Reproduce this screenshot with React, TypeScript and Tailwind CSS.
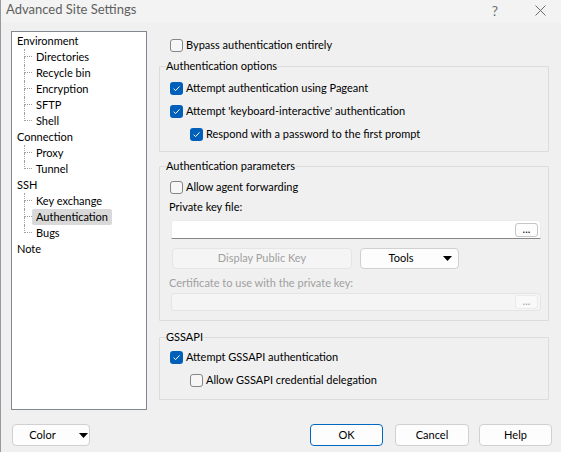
import React from "react";

const tree = [
  { label: "Environment", children: ["Directories", "Recycle bin", "Encryption", "SFTP", "Shell"] },
  { label: "Connection", children: ["Proxy", "Tunnel"] },
  { label: "SSH", children: ["Key exchange", "Authentication", "Bugs"] },
  { label: "Note", children: [] as string[] },
];

function Check({ checked }: { checked?: boolean }) {
  if (checked) {
    return (
      <span className="w-[13px] h-[13px] rounded-[3px] bg-[#005fb8] flex items-center justify-center shrink-0">
        <svg width="9" height="9" viewBox="0 0 9 9">
          <path d="M1.6 4.7 L3.6 6.6 L7.5 2.4" stroke="white" strokeWidth="1" fill="none" />
        </svg>
      </span>
    );
  }
  return <span className="w-[13px] h-[13px] rounded-[3px] border border-[#858585] bg-[#f6f6f6] shrink-0" />;
}

function CheckRow({ label, checked, className = "" }: { label: string; checked?: boolean; className?: string }) {
  return (
    <div className={`flex items-center h-[16px] gap-[3px] ${className}`}>
      <Check checked={checked} />
      <span className="leading-[16px] whitespace-nowrap">{label}</span>
    </div>
  );
}

function Arrow() {
  return (
    <svg width="9" height="5" viewBox="0 0 9 5" className="shrink-0">
      <polygon points="0,0 9,0 4.5,5" fill="#000" />
    </svg>
  );
}

function Group({ title, className = "", children }: { title: string; className?: string; children: React.ReactNode }) {
  return (
    <fieldset className={`border border-[#dcdcdc] rounded-[1px] w-[390px] ${className}`}>
      <legend className="ml-[6px] leading-[16px] px-0">{title}</legend>
      {children}
    </fieldset>
  );
}

function DialogButton({ children, primary, className = "" }: { children: React.ReactNode; primary?: boolean; className?: string }) {
  return (
    <button
      className={`h-[22px] rounded-[4px] border bg-[#fdfdfd] text-[11px] text-black flex items-center justify-center ${
        primary ? "border-[#0067c0]" : "border-[#d0d0d0]"
      } ${className}`}
    >
      {children}
    </button>
  );
}

export default function App() {
  return (
    <div
      className="w-[561px] h-[452px] bg-[#f0f0f0] overflow-hidden flex flex-col text-[11px] text-black border-l border-[#9a9a9a]"
      style={{ fontFamily: "Lato, 'Liberation Sans', sans-serif" }}
    >
      {/* title bar */}
      <div className="h-[23px] bg-[#f3f3f3] flex items-center pb-[3px] shrink-0">
        <span className="ml-[5px] text-[13px] text-[#5f5f5f]">Advanced Site Settings</span>
        <span className="ml-auto text-[14px] text-[#707070] mr-[37px]">?</span>
        <svg width="11" height="11" viewBox="0 0 11 11" className="mr-[15px]">
          <path d="M0.5 0.5 L10.5 10.5 M10.5 0.5 L0.5 10.5" stroke="#6a6a6a" strokeWidth="1" />
        </svg>
      </div>

      <div className="flex h-[387px] shrink-0">
        {/* navigation tree */}
        <div className="ml-[10px] mt-[8px] w-[136px] h-[379px] border border-[#828790] bg-white pt-[1px] pl-[5px]">
          {tree.map((node) => (
            <div key={node.label}>
              <div className="h-[16px] leading-[16px]">{node.label}</div>
              {node.children.map((child, i) => {
                const last = i === node.children.length - 1;
                const selected = child === "Authentication";
                return (
                  <div key={child} className="flex h-[16px]">
                    <div className="w-[7px] shrink-0" />
                    <div className="w-[8px] shrink-0 flex flex-col">
                      <div className="h-[8px] border-l border-b border-dotted border-[#a0a0a0]" />
                      <div className={`h-[8px] ${last ? "" : "border-l border-dotted border-[#a0a0a0]"}`} />
                    </div>
                    <div
                      className={`px-[4px] leading-[16px] whitespace-nowrap rounded-[2px] ${
                        selected ? "bg-[#d9d9d9]" : ""
                      }`}
                    >
                      {child}
                    </div>
                  </div>
                );
              })}
            </div>
          ))}
        </div>

        {/* right pane */}
        <div className="ml-[12px] flex flex-col">
          <CheckRow label="Bypass authentication entirely" className="mt-[14px] ml-[11px]" />

          <Group title="Authentication options" className="mt-[5px]">
            <div className="pl-[10px] pb-[9px]">
              <CheckRow label="Attempt authentication using Pageant" checked className="mt-[6px]" />
              <CheckRow label="Attempt 'keyboard-interactive' authentication" checked className="mt-[7px]" />
              <CheckRow label="Respond with a password to the first prompt" checked className="mt-[7px] ml-[20px]" />
            </div>
          </Group>

          <Group title="Authentication parameters" className="mt-[6px]">
            <div className="pl-[10px] pb-[9px]">
              <CheckRow label="Allow agent forwarding" className="mt-[5px]" />
              <div className="mt-[4px] h-[16px] leading-[16px] -ml-[1px]">Private key file:</div>
              <div className="mt-[5px] ml-[1px] w-[370px] h-[19px] bg-white border border-[#ececec] border-b-[#868686] rounded-t-[3px] flex items-center justify-end pr-[2px]">
                <div className="w-[23px] h-[14px] rounded-[3px] border border-[#c6c6c6] bg-[#fdfdfd] text-[11px] leading-[10px] flex items-end justify-center pb-[2px]">
                  ...
                </div>
              </div>
              <div className="mt-[9px] ml-[2px] flex">
                <div className="w-[180px] h-[21px] rounded-[4px] border border-[#e5e5e5] bg-[#f5f5f5] text-[#a0a0a0] flex items-center justify-center">
                  Display Public Key
                </div>
                <div className="ml-[8px] w-[99px] h-[21px] rounded-[4px] border border-[#d0d0d0] bg-[#fdfdfd] flex items-center">
                  <span className="w-[80px] text-center">Tools</span>
                  <span className="ml-[2px]">
                    <Arrow />
                  </span>
                </div>
              </div>
              <div className="mt-[6px] h-[16px] leading-[16px] -ml-[1px] text-[#a0a0a0]">
                Certificate to use with the private key:
              </div>
              <div className="mt-[2px] ml-[1px] w-[370px] h-[18px] bg-[#f5f5f5] border border-[#e4e4e4] rounded-[3px] flex items-center justify-end pr-[2px]">
                <div className="w-[23px] h-[14px] rounded-[3px] border border-[#ebebeb] bg-[#f9f9f9] text-[11px] text-[#a0a0a0] leading-[10px] flex items-end justify-center pb-[2px]">
                  ...
                </div>
              </div>
            </div>
          </Group>

          <Group title="GSSAPI" className="mt-[8px]">
            <div className="pl-[10px] pb-[11px]">
              <CheckRow label="Attempt GSSAPI authentication" checked className="mt-[4px]" />
              <CheckRow label="Allow GSSAPI credential delegation" className="mt-[7px] ml-[20px]" />
            </div>
          </Group>
        </div>
      </div>

      {/* bottom buttons */}
      <div className="flex pt-[14px] shrink-0">
        <div className="ml-[11px] w-[78px] h-[22px] rounded-[4px] border border-[#d0d0d0] bg-[#fdfdfd] flex items-center">
          <span className="w-[59px] text-center">Color</span>
          <span className="ml-[7px]">
            <Arrow />
          </span>
        </div>
        <DialogButton primary className="ml-auto w-[73px]">
          OK
        </DialogButton>
        <DialogButton className="ml-[12px] w-[74px]">Cancel</DialogButton>
        <DialogButton className="ml-[10px] w-[73px] mr-[9px]">Help</DialogButton>
      </div>
    </div>
  );
}
